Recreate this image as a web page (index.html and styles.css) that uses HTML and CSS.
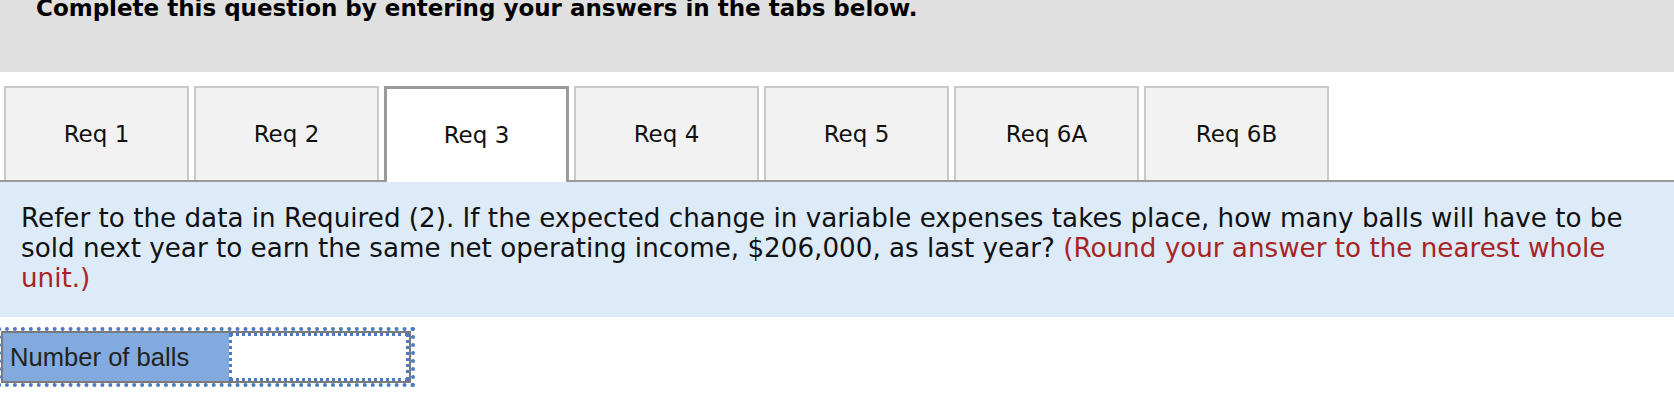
FILE: index.html
```html
<!DOCTYPE html>
<html>
<head>
<meta charset="utf-8">
<link rel="stylesheet" href="styles.css">
</head>
<body>
<div class="header">
  <h1 class="title">Complete this question by entering your answers in the tabs below.</h1>
</div>
<div class="tabs">
  <div class="tab">Req 1</div>
  <div class="tab">Req 2</div>
  <div class="tab active">Req 3</div>
  <div class="tab">Req 4</div>
  <div class="tab">Req 5</div>
  <div class="tab">Req 6A</div>
  <div class="tab">Req 6B</div>
</div>
<div class="panel">
  <p class="question">Refer to the data in Required (2). If the expected change in variable expenses takes place, how many balls will have to be sold next year to earn the same net operating income, $206,000, as last year? <span class="hint">(Round your answer to the nearest whole unit.)</span></p>
</div>
<div class="answer-wrap">
  <div class="answer">
    <div class="label">Number of balls</div>
    <div class="input"></div>
  </div>
</div>
</body>
</html>
```
FILE: styles.css
```css
html, body {
  margin: 0;
  padding: 0;
  background: #ffffff;
}
body {
  width: 1674px;
  height: 402px;
  overflow: hidden;
  font-family: "DejaVu Sans", Verdana, sans-serif;
  color: #111;
}
.header {
  background: #e0e0e0;
  height: 72px;
  padding-left: 36px;
  overflow: hidden;
}
.title {
  margin: -6px 0 0;
  font-size: 23px;
  line-height: 28px;
  font-weight: bold;
  color: #000;
  white-space: nowrap;
}
.tabs {
  display: flex;
  gap: 5px;
  margin-top: 14px;
  padding-left: 4px;
  border-bottom: 2px solid #9a9a9a;
  height: 94px;
}
.tab {
  box-sizing: border-box;
  width: 185px;
  height: 94px;
  background: #f2f2f2;
  border: 2px solid #c9c9c9;
  border-bottom: none;
  display: flex;
  align-items: center;
  justify-content: center;
  font-size: 23px;
  color: #111;
}
.tab.active {
  background: #ffffff;
  border: 3px solid #9a9a9a;
  border-bottom: none;
  height: 96px;
  padding-bottom: 2px;
}
.panel {
  background: #ddebf8;
  padding: 21px 20px 24px 21px;
}
.question {
  margin: 0;
  font-size: 26.2px;
  line-height: 30px;
}
.hint {
  color: #a82424;
}
.answer-wrap {
  padding: 14px 0 0 0;
}
.answer {
  display: inline-flex;
  outline: 4px dotted #4a7bc4;
  outline-offset: 0;
  border: 2px solid #7a7a7a;
  margin-left: 1px;
}
.label {
  box-sizing: border-box;
  width: 226px;
  height: 48px;
  background: #83aadf;
  font-family: "Liberation Sans", Arial, sans-serif;
  font-size: 25.6px;
  line-height: 48px;
  padding-left: 7px;
  color: #222;
}
.input {
  box-sizing: border-box;
  width: 180px;
  height: 48px;
  background: #fff;
  border: 3px dotted #4a7bc4;
}
```
